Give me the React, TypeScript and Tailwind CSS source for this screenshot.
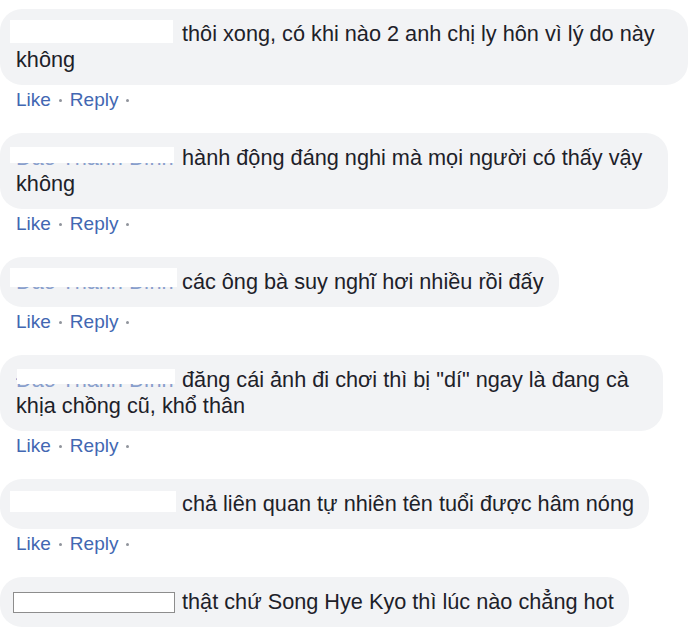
import type { ReactNode } from 'react';

type Mask = { top: number; left: number; width: number; height: number; border?: boolean };

type Comment = {
  lines: ReactNode[];
  width?: number;
  mask: Mask;
  actions?: boolean;
};

const comments: Comment[] = [
  {
    lines: ['thôi xong, có khi nào 2 anh chị ly hôn vì lý do này', 'không'],
    width: 688,
    mask: { top: -1, left: -6, width: 163, height: 23 },
    actions: true,
  },
  {
    lines: ['hành động đáng nghi mà mọi người có thấy vậy', 'không'],
    width: 668,
    mask: { top: 2, left: -6, width: 164, height: 16 },
    actions: true,
  },
  {
    lines: ['các ông bà suy nghĩ hơi nhiều rồi đấy'],
    mask: { top: -1, left: -6, width: 167, height: 19 },
    actions: true,
  },
  {
    lines: ['đăng cái ảnh đi chơi thì bị "dí" ngay là đang cà', 'khịa chồng cũ, khổ thân'],
    width: 663,
    mask: { top: 2, left: 1, width: 158, height: 15 },
    actions: true,
  },
  {
    lines: ['chả liên quan tự nhiên tên tuổi được hâm nóng'],
    mask: { top: 0, left: -6, width: 166, height: 21 },
    actions: true,
  },
  {
    lines: ['thật chứ Song Hye Kyo thì lúc nào chẳng hot'],
    mask: { top: 3, left: -3, width: 162, height: 21, border: true },
  },
];

// name is blanked out with a white box sitting over it, like the screenshot
function HiddenName({ mask }: { mask: Mask }) {
  return (
    <span className="relative inline-block w-[160px] align-top">
      <span className="block whitespace-nowrap text-[#4267b2] opacity-60">Đào Thanh Bình</span>
      <span
        className={mask.border ? 'absolute bg-white border border-[#8d8d8d]' : 'absolute bg-white'}
        style={{ top: mask.top, left: mask.left, width: mask.width, height: mask.height }}
      />
    </span>
  );
}

function Dot() {
  return <span className="h-[3px] w-[3px] self-center rounded-full bg-[#90949c]" />;
}

export default function App() {
  return (
    <div className="flex min-h-screen flex-col gap-[21px] bg-white pt-[9px] font-['Liberation_Sans',Arial,sans-serif]">
      {comments.map((c, i) => (
        <div key={i} className="flex flex-col items-start gap-[3px]">
          <div
            className="rounded-[22px] bg-[#f2f3f5] py-3 pl-4 pr-[15px] text-[21.7px] leading-[26px] text-[#1d2129]"
            style={c.width ? { width: c.width } : undefined}
          >
            <div className="whitespace-nowrap">
              <HiddenName mask={c.mask} /> {c.lines[0]}
            </div>
            {c.lines[1] && <div className="whitespace-nowrap">{c.lines[1]}</div>}
          </div>
          {c.actions && (
            <div className="flex h-6 items-center gap-[8px] pl-4 text-[19px] leading-6 text-[#4267b2]">
              <span>Like</span>
              <Dot />
              <span>Reply</span>
              <Dot />
            </div>
          )}
        </div>
      ))}
    </div>
  );
}
